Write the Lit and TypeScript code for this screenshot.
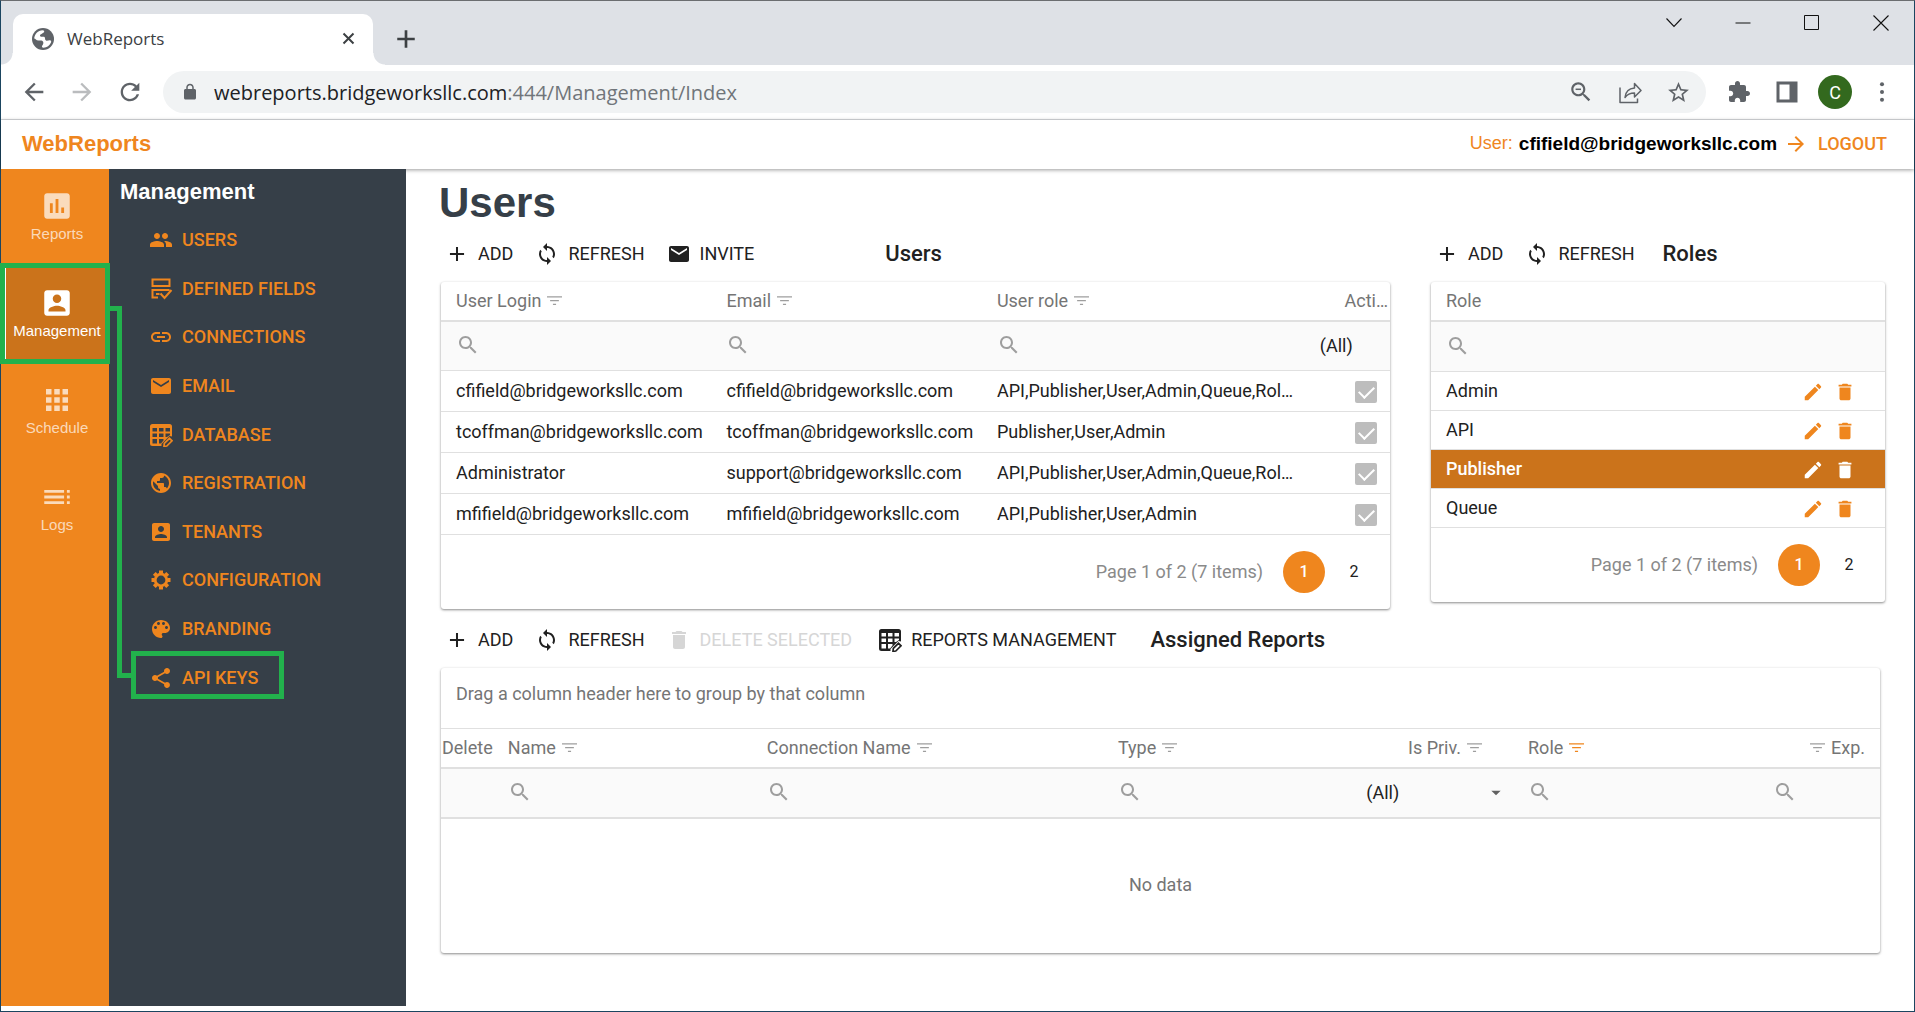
import { LitElement, html, css, svg } from "lit";
import { customElement, property } from "lit/decorators.js";
import { classMap } from "lit/directives/class-map.js";

const SEARCH =
  "M15.5 14h-.79l-.28-.27C15.41 12.59 16 11.11 16 9.5 16 5.91 13.09 3 9.5 3S3 5.91 3 9.5 5.91 16 9.5 16c1.61 0 3.09-.59 4.23-1.57l.27.28v.79l5 4.99L20.49 19l-4.99-5zm-6 0C7.01 14 5 11.99 5 9.5S7.01 5 9.5 5 14 7.01 14 9.5 11.99 14 9.5 14z";

const ICONS: Record<string, unknown> = {
  reports: svg`<path d="M19 3H5c-1.1 0-2 .9-2 2v14c0 1.1.9 2 2 2h14c1.1 0 2-.9 2-2V5c0-1.1-.9-2-2-2zM9 17H7v-7h2v7zm4 0h-2V7h2v10zm4 0h-2v-4h2v4z"/>`,
  account: svg`<path d="M3 5v14c0 1.1.89 2 2 2h14c1.1 0 2-.9 2-2V5c0-1.1-.9-2-2-2H5c-1.11 0-2 .9-2 2zm12 4c0 1.66-1.34 3-3 3s-3-1.34-3-3 1.34-3 3-3 3 1.34 3 3zm-9 8c0-2 4-3.1 6-3.1s6 1.1 6 3.1v1H6v-1z"/>`,
  apps: svg`<path d="M4 8h4V4H4v4zm6 12h4v-4h-4v4zm-6 0h4v-4H4v4zm0-6h4v-4H4v4zm6 0h4v-4h-4v4zm6-10v4h4V4h-4zm-6 4h4V4h-4v4zm6 6h4v-4h-4v4zm0 6h4v-4h-4v4z" transform="translate(-1.2 -1.2) scale(1.1)"/>`,
  logs: svg`<path d="M3 9h14V7H3v2zm0 4h14v-2H3v2zm0 4h14v-2H3v2zm16 0h2v-2h-2v2zm0-10v2h2V7h-2zm0 6h2v-2h-2v2z"/>`,
  people: svg`<path d="M16 11c1.66 0 2.99-1.34 2.99-3S17.66 5 16 5c-1.66 0-3 1.34-3 3s1.34 3 3 3zm-8 0c1.66 0 2.99-1.34 2.99-3S9.66 5 8 5C6.34 5 5 6.34 5 8s1.34 3 3 3zm0 2c-2.33 0-7 1.17-7 3.5V19h14v-2.5c0-2.33-4.67-3.5-7-3.5zm8 0c-.29 0-.62.02-.97.05 1.16.84 1.97 1.97 1.97 3.45V19h6v-2.5c0-2.33-4.67-3.5-7-3.5z"/>`,
  fields: svg`<g fill="none" stroke="currentColor" stroke-width="2"><rect x="3.500" y="2.500" width="17" height="6.500"/><path d="M9 20.500H3.500V13H20.500M7 17h3.500M11.500 16.500l4 4.500 7-8"/></g>`,
  link: svg`<path d="M3.9 12c0-1.71 1.39-3.1 3.1-3.1h4V7H7c-2.76 0-5 2.24-5 5s2.24 5 5 5h4v-1.9H7c-1.71 0-3.1-1.39-3.1-3.1zM8 13h8v-2H8v2zm9-6h-4v1.9h4c1.71 0 3.1 1.39 3.1 3.1s-1.39 3.1-3.1 3.1h-4V17h4c2.76 0 5-2.24 5-5s-2.24-5-5-5z"/>`,
  email: svg`<path d="M20 4H4c-1.1 0-1.99.9-1.99 2L2 18c0 1.1.9 2 2 2h16c1.1 0 2-.9 2-2V6c0-1.1-.9-2-2-2zm0 4l-8 5-8-5V6l8 5 8-5v2z"/>`,
  tableEdit: svg`<path fill-rule="evenodd" d="M3.500 1h17A2.500 2.500 0 0 1 23 3.500V13.500l-2.500-.5-8 8V23h-9A2.500 2.500 0 0 1 1 20.500v-17A2.500 2.500 0 0 1 3.500 1zM3.500 5v3.500h4.500V5zm6.500 0v3.500h4.500V5zm6.500 0v3.500H21V5zM3.500 10.500V14h4.500v-3.500zm6.500 0V14h4.500v-3.500zm6.500 0V14H18l3-2v-1.500zM3.500 16v4.500h4.500V16zm6.500 0v4.500h2l2.500-3V16z"/><path fill="none" stroke="currentColor" stroke-width="1.700" d="M15 23.300l.3-2.800 5.200-5.200 2.500 2.500-5.200 5.200z"/>`,
  globe: svg`<path d="M12 2C6.480 2 2 6.480 2 12s4.480 10 10 10 10-4.480 10-10S17.520 2 12 2zm-1 17.930c-3.950-.49-7-3.850-7-7.930 0-.62.080-1.210.210-1.790L9 15v1c0 1.100.9 2 2 2v1.930zm6.900-2.540c-.26-.81-1-1.390-1.900-1.390h-1v-3c0-.55-.45-1-1-1H8v-2h2c.55 0 1-.45 1-1V7h2c1.100 0 2-.9 2-2v-.41c2.930 1.190 5 4.060 5 7.410 0 2.080-.8 3.970-2.100 5.390z"/>`,
  favicon: svg`<circle cx="12" cy="12" r="11"/><path fill="#fff" d="M3.200 11.500C3.500 7 7 3.600 11.500 3.200c1.500 0 2 .8 1.500 2L10.500 7c-1.500.5-2 1.500-1 2.500 1 .8 3-.3 4 .5 1 1 0 2.500 1.500 3.500 1.300.8 2.500-.5 4-.3 1 .2 1.500 1 1 2.300-1.300 3-4 5-7.500 5.300-1.500 0-2-1-1.200-2.200 1-1.500 1.700-3.300.2-4.600-1-.8-2.500-.5-4-.5-2.500 0-3-2-4.300-2z"/>`,
  gear: svg`<g fill="none" stroke="currentColor"><circle cx="12" cy="12" r="5.800" stroke-width="2.800"/><g stroke-width="4"><path d="M12 2.500v3M12 18.500v3M2.500 12h3M18.500 12h3"/><path d="M5.300 5.300l2 2M16.700 16.700l2 2M5.300 18.700l2-2M16.700 7.300l2-2"/></g></g>`,
  palette: svg`<path d="M12 3c-4.970 0-9 4.030-9 9s4.030 9 9 9c.83 0 1.500-.67 1.500-1.500 0-.39-.15-.74-.39-1.010-.23-.26-.38-.61-.38-.99 0-.83.67-1.500 1.500-1.500H16c2.760 0 5-2.240 5-5 0-4.420-4.030-8-9-8zm-5.500 9c-.83 0-1.500-.67-1.500-1.500S5.670 9 6.500 9 8 9.670 8 10.500 7.330 12 6.500 12zm3-4C8.670 8 8 7.330 8 6.500S8.670 5 9.500 5s1.500.67 1.500 1.500S10.330 8 9.500 8zm5 0c-.83 0-1.500-.67-1.500-1.500S13.670 5 14.500 5s1.500.67 1.500 1.500S15.330 8 14.500 8zm3 4c-.83 0-1.500-.67-1.500-1.500S16.670 9 17.500 9s1.500.67 1.500 1.500-.67 1.500-1.500 1.500z"/>`,
  share: svg`<path d="M18 16.080c-.76 0-1.440.3-1.960.77L8.910 12.700c.05-.23.09-.46.09-.7s-.04-.47-.09-.7l7.050-4.110c.54.5 1.250.81 2.040.81 1.660 0 3-1.340 3-3s-1.340-3-3-3-3 1.340-3 3c0 .24.04.47.09.7L8.040 9.810C7.500 9.310 6.790 9 6 9c-1.660 0-3 1.340-3 3s1.340 3 3 3c.79 0 1.500-.31 2.040-.81l7.120 4.160c-.05.21-.08.43-.08.65 0 1.610 1.310 2.920 2.920 2.920 1.610 0 2.920-1.310 2.920-2.920s-1.310-2.920-2.920-2.920z"/>`,
  plus: svg`<path d="M19 13h-6v6h-2v-6H5v-2h6V5h2v6h6v2z" transform="translate(-1.200 -1.200) scale(1.100)"/>`,
  sync: svg`<path d="M12 4V1L8 5l4 4V6c3.310 0 6 2.690 6 6 0 1.010-.25 1.970-.7 2.800l1.460 1.460C19.540 15.030 20 13.570 20 12c0-4.420-3.580-8-8-8zm0 14c-3.310 0-6-2.690-6-6 0-1.010.25-1.970.7-2.800L5.240 7.740C4.460 8.970 4 10.430 4 12c0 4.420 3.580 8 8 8v3l4-4-4-4v3z"/>`,
  edit: svg`<path d="M3 17.250V21h3.750L17.810 9.940l-3.750-3.750L3 17.250zM20.710 7.040c.39-.39.39-1.020 0-1.410l-2.340-2.340c-.39-.39-1.020-.39-1.410 0l-1.830 1.830 3.750 3.750 1.830-1.830z"/>`,
  trash: svg`<path d="M6 19c0 1.100.9 2 2 2h8c1.100 0 2-.9 2-2V7H6v12zM19 4h-3.500l-1-1h-5l-1 1H5v2h14V4z"/>`,
  search: svg`<path d=${SEARCH}/>`,
  zoomOut: svg`<path d=${SEARCH}/><path d="M7 8.800h5v1.400H7z"/>`,
  star: svg`<path d="M22 9.240l-7.190-.62L12 2 9.190 8.630 2 9.240l5.460 4.730L5.820 21 12 17.270 18.180 21l-1.630-7.030L22 9.240zM12 15.400l-3.760 2.270 1-4.280-3.320-2.880 4.380-.38L12 6.100l1.710 4.040 4.380.38-3.320 2.880 1 4.280L12 15.400z"/>`,
  puzzle: svg`<path d="M20.500 11H19V7c0-1.100-.9-2-2-2h-4V3.500C13 2.120 11.880 1 10.500 1S8 2.120 8 3.500V5H4c-1.100 0-1.990.9-1.990 2v3.800H3.500c1.490 0 2.700 1.210 2.700 2.700s-1.210 2.700-2.700 2.700H2V20c0 1.100.9 2 2 2h3.800v-1.500c0-1.490 1.210-2.700 2.700-2.700 1.490 0 2.700 1.210 2.700 2.700V22H17c1.100 0 2-.9 2-2v-4h1.500c1.380 0 2.500-1.120 2.500-2.500S21.880 11 20.500 11z"/>`,
  panel: svg`<path fill-rule="evenodd" d="M1.500 1.500h21v21h-21zM4.500 4.500v15h10v-15z"/>`,
  dots: svg`<circle cx="12" cy="3.500" r="2.200"/><circle cx="12" cy="12" r="2.200"/><circle cx="12" cy="20.500" r="2.200"/>`,
  lock: svg`<path d="M18 8h-1V6c0-2.760-2.240-5-5-5S7 3.240 7 6v2H6c-1.100 0-2 .9-2 2v10c0 1.100.9 2 2 2h12c1.100 0 2-.9 2-2V10c0-1.100-.9-2-2-2zM9 6c0-1.660 1.340-3 3-3s3 1.340 3 3v2H9V6z"/>`,
  back: svg`<path d="M20 11H7.830l5.590-5.590L12 4l-8 8 8 8 1.410-1.410L7.830 13H20v-2z"/>`,
  forward: svg`<path d="M12 4l-1.410 1.410L16.170 11H4v2h12.170l-5.580 5.590L12 20l8-8z"/>`,
  reload: svg`<path d="M17.650 6.350C16.200 4.900 14.210 4 12 4c-4.420 0-7.990 3.580-7.990 8s3.570 8 7.990 8c3.730 0 6.840-2.550 7.730-6h-2.080c-.82 2.330-3.040 4-5.650 4-3.310 0-6-2.690-6-6s2.690-6 6-6c1.660 0 3.140.69 4.220 1.780L13 11h7V4l-2.350 2.350z"/>`,
  send: svg`<path fill="none" stroke="currentColor" stroke-width="1.500" stroke-linejoin="round" d="M2 7.500v15h17.500v-4M7 17.500c.5-6 3.500-9 9.500-9.500V3.500l6.500 7-6.500 6.500v-4c-4 0-7 1-9.500 4.500z"/>`,
  chevron: svg`<path fill="none" stroke="currentColor" stroke-width="1.100" d="M4.500 7.500l7.500 8 7.500-8"/>`,
  minimize: svg`<path d="M4.500 11.500h15v1h-15z"/>`,
  maximize: svg`<path fill="none" stroke="currentColor" stroke-width="1" d="M4.500 4.500h14v14h-14z"/>`,
  closeWin: svg`<path fill="none" stroke="currentColor" stroke-width="1.100" d="M4.500 4.500l15 15M19.500 4.500l-15 15"/>`,
  close: svg`<path fill="none" stroke="currentColor" stroke-width="3.200" d="M4 4l16 16M20 4L4 20"/>`,
  newTab: svg`<path fill="none" stroke="currentColor" stroke-width="3.200" d="M12 1.500v21M1.500 12h21"/>`,
  filter: svg`<path d="M0 5h24v2H0zM5 11h14v2H5zM9.500 17h5v2h-5z"/>`,
  caret: svg`<path d="M4 8h16l-8 8z"/>`,
};

@customElement("ui-icon")
class UiIcon extends LitElement {
  @property() name = "";
  @property({ type: Number }) size = 24;
  static styles = css`
    :host { display: inline-flex; flex: none; }
    svg { display: block; fill: currentColor; }
  `;
  render() {
    return html`<svg width=${this.size} height=${this.size} viewBox="0 0 24 24" aria-hidden="true">${ICONS[this.name]}</svg>`;
  }
}

@customElement("browser-chrome")
class BrowserChrome extends LitElement {
  static styles = css`
    :host { display: block; font-family: "Open Sans", "Noto Sans", sans-serif; color: #5f6368; }
    button { border: 0; padding: 0; background: none; color: inherit; font: inherit; display: inline-flex; align-items: center; justify-content: center; }
    .strip { height: 64px; background: #dee1e6; display: flex; align-items: flex-end; padding-left: 12px; }
    .tab { width: 360px; height: 51px; box-sizing: border-box; background: #fff; border-radius: 10px 10px 0 0; display: flex; align-items: center; padding: 0 17px 2px 18px; position: relative; color: #3c4043; }
    .tab::before, .tab::after { content: ""; position: absolute; bottom: 0; width: 12px; height: 12px; }
    .tab::before { left: -12px; background: radial-gradient(circle at 0 0, #dee1e6 11px, #fff 12px); }
    .tab::after { right: -12px; background: radial-gradient(circle at 100% 0, #dee1e6 11px, #fff 12px); }
    .tab-icon { color: #5f6368; }
    .tab-title { font-size: 17px; flex: 1; padding-left: 12px; }
    .new { align-self: center; margin-left: 23px; margin-top: 12px; color: #3c4043; }
    .window { margin-left: auto; align-self: flex-start; display: flex; padding: 10px 21px 0 0; gap: 45px; color: #111; }
    .bar { height: 54px; background: #fff; display: flex; align-items: center; border-bottom: 1px solid #d9dbde; padding: 0 21px 0 19px; }
    .nav { display: flex; gap: 20px; padding-right: 19px; }
    .off { color: #babcbe; }
    .omni { flex: 1; height: 42px; border-radius: 21px; background: #f1f3f4; display: flex; align-items: center; padding: 0 15px 0 18px; }
    .url { flex: 1; margin-left: 15px; font-size: 20px; color: #70757a; }
    .host { color: #202124; }
    .omni-actions { display: flex; gap: 24px; }
    .actions { display: flex; align-items: center; gap: 24px; padding-left: 21px; }
    .avatar { width: 34px; height: 34px; border-radius: 50%; background: #33691e; color: #fff; font: 18px Roboto, sans-serif; margin: 0 -5px; }
  `;
  render() {
    return html`
      <div class="strip">
        <div class="tab">
          <ui-icon class="tab-icon" name="favicon" size="24"></ui-icon>
          <span class="tab-title">WebReports</span>
          <button aria-label="Close tab"><ui-icon name="close" size="15"></ui-icon></button>
        </div>
        <button class="new" aria-label="New tab"><ui-icon name="newTab" size="20"></ui-icon></button>
        <div class="window">
          <button aria-label="Search tabs"><ui-icon name="chevron" size="24"></ui-icon></button>
          <button aria-label="Minimize"><ui-icon name="minimize" size="24"></ui-icon></button>
          <button aria-label="Maximize"><ui-icon name="maximize" size="24"></ui-icon></button>
          <button aria-label="Close"><ui-icon name="closeWin" size="24"></ui-icon></button>
        </div>
      </div>
      <div class="bar">
        <div class="nav">
          <button aria-label="Back"><ui-icon name="back" size="28"></ui-icon></button>
          <button class="off" aria-label="Forward"><ui-icon name="forward" size="28"></ui-icon></button>
          <button aria-label="Reload"><ui-icon name="reload" size="28"></ui-icon></button>
        </div>
        <div class="omni">
          <ui-icon name="lock" size="18"></ui-icon>
          <span class="url"><span class="host">webreports.bridgeworksllc.com</span>:444/Management/Index</span>
          <div class="omni-actions">
            <button aria-label="Zoom"><ui-icon name="zoomOut" size="26"></ui-icon></button>
            <button aria-label="Share"><ui-icon name="send" size="24"></ui-icon></button>
            <button aria-label="Bookmark"><ui-icon name="star" size="25"></ui-icon></button>
          </div>
        </div>
        <div class="actions">
          <button aria-label="Extensions"><ui-icon name="puzzle" size="24"></ui-icon></button>
          <button aria-label="Side panel"><ui-icon name="panel" size="24"></ui-icon></button>
          <button class="avatar" aria-label="Profile">C</button>
          <button aria-label="Menu"><ui-icon name="dots" size="22"></ui-icon></button>
        </div>
      </div>
    `;
  }
}

const RAIL = [
  ["Reports", "reports", 34],
  ["Management", "account", 34],
  ["Schedule", "apps", 30],
  ["Logs", "logs", 34],
] as const;

const MENU = [
  ["USERS", "people"],
  ["DEFINED FIELDS", "fields"],
  ["CONNECTIONS", "link"],
  ["EMAIL", "email"],
  ["DATABASE", "tableEdit"],
  ["REGISTRATION", "globe"],
  ["TENANTS", "account"],
  ["CONFIGURATION", "gear"],
  ["BRANDING", "palette"],
  ["API KEYS", "share"],
];

@customElement("side-nav")
class SideNav extends LitElement {
  static styles = css`
    :host { display: flex; position: relative; flex: none; font-family: "Liberation Sans", Arial, sans-serif; }
    .rail { width: 108px; background: #ef861e; }
    .rail-item { box-sizing: border-box; height: 97px; border-left: 4px solid transparent; display: flex; flex-direction: column; align-items: center; justify-content: flex-start; padding-top: 20px; gap: 2px; font-size: 15px; line-height: 18px; color: rgba(255, 255, 255, 0.7); text-decoration: none; white-space: nowrap; }
    .rail-icon { height: 34px; align-items: center; }
    .current { background: #cb731b; color: #fff; }
    .panel { width: 297px; background: #363f48; }
    .title { margin: 0; padding: 10px 0 0 11px; font-size: 22px; line-height: 26px; color: #fff; }
    .menu { list-style: none; margin: 0; padding: 11px 0 0 40px; height: 486px; display: grid; grid-auto-rows: 1fr; }
    .link { height: 100%; display: flex; align-items: center; gap: 9px; color: #ef861e; text-decoration: none; font: 500 18px/24px Roboto, sans-serif; }
    .mark { position: absolute; box-sizing: border-box; border: 5px solid #22b14c; pointer-events: none; }
    .mark-item { left: -1px; top: 94px; width: 110px; height: 101px; }
    .mark-link { left: 130px; top: 482px; width: 153px; height: 48px; }
    .mark-path { left: 109px; top: 137px; width: 12px; height: 371px; border-width: 5px 5px 0 0; }
    .mark-end { left: 116px; top: 504px; width: 14px; height: 5px; border-width: 5px 0 0; }
    .mark-edge { position: absolute; left: 4px; top: 99px; width: 1px; height: 91px; background: #fff; }
  `;
  render() {
    return html`
      <nav class="rail" aria-label="Sections">
        ${RAIL.map(
          ([label, icon, size]) => html`<a href="#" class=${classMap({ "rail-item": true, current: label === "Management" })}>
            <ui-icon class="rail-icon" name=${icon} size=${size}></ui-icon>${label}</a>`
        )}
      </nav>
      <nav class="panel" aria-label="Management">
        <h2 class="title">Management</h2>
        <ul class="menu">
          ${MENU.map(([label, icon]) => html`<li><a class="link" href="#"><ui-icon name=${icon} size="24"></ui-icon>${label}</a></li>`)}
        </ul>
      </nav>
      <span class="mark mark-path"></span>
      <span class="mark mark-end"></span>
      <span class="mark mark-item"></span>
      <span class="mark-edge"></span>
      <span class="mark mark-link"></span>
    `;
  }
}

const USERS = [
  ["cfifield@bridgeworksllc.com", "cfifield@bridgeworksllc.com", "API,Publisher,User,Admin,Queue,Rol…"],
  ["tcoffman@bridgeworksllc.com", "tcoffman@bridgeworksllc.com", "Publisher,User,Admin"],
  ["Administrator", "support@bridgeworksllc.com", "API,Publisher,User,Admin,Queue,Rol…"],
  ["mfifield@bridgeworksllc.com", "mfifield@bridgeworksllc.com", "API,Publisher,User,Admin"],
];

const ROLES = ["Admin", "API", "Publisher", "Queue"];

const toolButton = (label: string, icon: string, size: number, disabled = false) =>
  html`<button class="tool" ?disabled=${disabled}><span class="tool-icon"><ui-icon name=${icon} size=${size}></ui-icon></span>${label}</button>`;

const filterIcon = (active = false) =>
  html`<button class=${classMap({ "filter-btn": true, active })} aria-label="Filter"><ui-icon name="filter" size="15"></ui-icon></button>`;

const searchBox = (label: string) =>
  html`<label class="search"><ui-icon name="search" size="24"></ui-icon><input type="text" aria-label=${label} /></label>`;

const pager = () => html`<div class="pager">
  <span class="pager-info">Page 1 of 2 (7 items)</span>
  <button class="page selected">1</button>
  <button class="page">2</button>
</div>`;

@customElement("users-page")
class UsersPage extends LitElement {
  static styles = css`
    :host { display: block; flex: 1; min-width: 0; padding: 11px 29px 0 33px; font: 18px/24px Roboto, sans-serif; color: #212121; }
    * { box-sizing: border-box; }
    button { border: 0; padding: 0; background: none; color: inherit; font: inherit; }
    .heading { margin: 0; font: bold 42px/46px "Liberation Sans", Arial, sans-serif; color: #363f48; }
    .tops { display: grid; grid-template-columns: 949fr 454fr; gap: 41px; align-items: start; margin-left: 2px; }
    .toolbar { height: 56px; display: flex; align-items: center; padding-left: 4px; }
    .tool { display: inline-flex; align-items: center; margin-right: 22px; white-space: nowrap; }
    .tool[disabled] { color: #d6d6d6; margin-right: 26px; }
    .tool-icon { width: 24px; display: inline-flex; justify-content: center; margin-right: 9px; }
    .section { margin: 0; font-size: 22px; line-height: 26px; font-weight: 500; }
    .push { padding-left: 109px; }
    .near { padding-left: 6px; }
    .far { padding-left: 12px; }
    .card { background: #fff; border-radius: 3px; box-shadow: 0 1px 3px rgba(0, 0, 0, 0.3), 0 1px 2px rgba(0, 0, 0, 0.2); }
    table { width: 100%; table-layout: fixed; border-collapse: separate; border-spacing: 0; }
    th { height: 40px; padding: 0 0 0 15px; text-align: left; font-weight: 400; color: #757575; border-bottom: 2px solid #e0e0e0; white-space: nowrap; }
    th.tight { padding: 0 0 0 1px; }
    th.end { text-align: right; padding-right: 15px; }
    th.inset { text-align: right; padding-right: 25px; }
    th.flush { text-align: right; padding: 0 2px 0 0; }
    .filter-btn { color: #9e9e9e; display: inline-flex; vertical-align: middle; margin: 0 6px 3px; }
    .active { color: #ef861e; }
    td { height: 41px; padding: 0 4px 0 15px; border-bottom: 1px solid #e0e0e0; overflow: hidden; text-overflow: ellipsis; white-space: nowrap; }
    .filters td { height: 49px; background: #fafafa; color: #212121; }
    .filters.thick td { border-bottom-width: 2px; height: 50px; }
    .search { display: flex; color: #9e9e9e; }
    .search input { width: 100%; min-width: 0; border: 0; outline: 0; background: none; font: inherit; }
    select { appearance: none; border: 0; outline: 0; background: none; font: inherit; color: #212121; padding: 0; width: 100%; }
    .pick { display: flex; align-items: center; color: #616161; }
    td.all { padding: 0 8px 0 20px; }
    td.all.inset { padding: 0 10px 0 36px; }
    td.check { padding: 0 13px 0 0; text-align: right; }
    .tick { appearance: none; width: 22px; height: 22px; margin: 0; border-radius: 2px; background: #bdbdbd; display: inline-grid; place-items: center; vertical-align: middle; }
    .tick::before { content: ""; width: 13px; height: 7px; border: solid #fff; border-width: 0 0 2px 2px; rotate: -45deg; translate: 0 -2px; }
    .roles td { height: 39px; }
    .roles .filters td { height: 50px; }
    td.acts { padding: 0 29px 0 0; color: #ef861e; text-align: right; }
    .acts button { display: inline-flex; vertical-align: middle; margin-left: 10px; }
    .picked td { background: #cb731b; color: #fff; }
    .picked .name { font-weight: 500; }
    .pager { display: flex; align-items: center; justify-content: flex-end; padding: 16px; }
    .pager-info { color: #8a8a8a; padding-right: 20px; }
    .page { width: 42px; height: 42px; border-radius: 50%; font-size: 16px; margin-right: 8px; }
    .page:last-child { margin-right: -1px; }
    .selected { background: #ef861e; color: #fff; font-weight: 500; }
    .wide { margin: 3px 5px 0 2px; }
    .group { height: 61px; padding: 14px 15px; border-bottom: 1px solid #e0e0e0; color: #757575; }
    td.empty { height: 134px; padding: 0 0 2px; text-align: center; color: #757575; border: 0; }
  `;

  private usersGrid() {
    return html`<table>
      <colgroup><col style="width:28.5%" /><col style="width:28.5%" /><col style="width:33.5%" /><col /></colgroup>
      <thead><tr>
        <th>User Login${filterIcon()}</th><th>Email${filterIcon()}</th><th>User role${filterIcon()}</th>
        <th class="flush">Acti…</th>
      </tr></thead>
      <tbody>
        <tr class="filters">
          <td>${searchBox("Filter user login")}</td><td>${searchBox("Filter email")}</td><td>${searchBox("Filter user role")}</td>
          <td class="all"><select aria-label="Filter active"><option>(All)</option></select></td>
        </tr>
        ${USERS.map(([login, email, role]) => html`<tr>
          <td>${login}</td><td>${email}</td><td>${role}</td>
          <td class="check"><input class="tick" type="checkbox" checked disabled aria-label=${"Active " + login} /></td>
        </tr>`)}
      </tbody>
    </table>`;
  }

  private rolesGrid() {
    return html`<table class="roles">
      <colgroup><col /><col style="width:35%" /></colgroup>
      <thead><tr><th>Role</th><th></th></tr></thead>
      <tbody>
        <tr class="filters"><td>${searchBox("Filter role")}</td><td></td></tr>
        ${ROLES.map((role) => html`<tr class=${classMap({ picked: role === "Publisher" })}>
          <td class="name">${role}</td>
          <td class="acts">
            <button aria-label=${"Edit " + role}><ui-icon name="edit" size="22"></ui-icon></button><button aria-label=${"Delete " + role}><ui-icon name="trash" size="22"></ui-icon></button>
          </td>
        </tr>`)}
      </tbody>
    </table>`;
  }

  private reportsGrid() {
    return html`<table>
      <colgroup>
        <col style="width:3.6%" /><col style="width:18%" /><col style="width:24.4%" /><col style="width:15.8%" />
        <col style="width:12.7%" /><col style="width:17%" /><col />
      </colgroup>
      <thead><tr>
        <th class="tight">Delete</th><th>Name${filterIcon()}</th><th>Connection Name${filterIcon()}</th><th>Type${filterIcon()}</th>
        <th class="inset">Is Priv.${filterIcon()}</th><th>Role${filterIcon(true)}</th><th class="end">${filterIcon()}Exp.</th>
      </tr></thead>
      <tbody>
        <tr class="filters thick">
          <td></td><td>${searchBox("Filter name")}</td><td>${searchBox("Filter connection name")}</td><td>${searchBox("Filter type")}</td>
          <td class="all inset"><label class="pick"><select aria-label="Filter private"><option>(All)</option></select><ui-icon name="caret" size="14"></ui-icon></label></td>
          <td>${searchBox("Filter role")}</td><td>${searchBox("Filter expiration")}</td>
        </tr>
        <tr><td class="empty" colspan="7">No data</td></tr>
      </tbody>
    </table>`;
  }

  render() {
    return html`
      <h1 class="heading">Users</h1>
      <div class="tops">
        <section>
          <div class="toolbar">
            ${toolButton("ADD", "plus", 22)}${toolButton("REFRESH", "sync", 24)}${toolButton("INVITE", "email", 24)}
            <h2 class="section push">Users</h2>
          </div>
          <div class="card">${this.usersGrid()}${pager()}</div>
        </section>
        <section>
          <div class="toolbar">
            ${toolButton("ADD", "plus", 22)}${toolButton("REFRESH", "sync", 24)}
            <h2 class="section near">Roles</h2>
          </div>
          <div class="card">${this.rolesGrid()}${pager()}</div>
        </section>
      </div>
      <section class="wide">
        <div class="toolbar">
          ${toolButton("ADD", "plus", 22)}${toolButton("REFRESH", "sync", 24)}${toolButton("DELETE SELECTED", "trash", 24, true)}
          ${toolButton("REPORTS MANAGEMENT", "tableEdit", 24)}
          <h2 class="section far">Assigned Reports</h2>
        </div>
        <div class="card">
          <div class="group">Drag a column header here to group by that column</div>
          ${this.reportsGrid()}
        </div>
      </section>
    `;
  }
}

@customElement("app-root")
class AppRoot extends LitElement {
  static styles = css`
    :host { display: flex; flex-direction: column; box-sizing: border-box; min-height: 100vh; background: #fff; border: 1px solid #1b4560; border-top-color: #6b6d70; }
    .header { height: 49px; box-sizing: border-box; display: flex; align-items: center; justify-content: space-between; padding: 0 27px 2px 21px; background: #fff; box-shadow: 0 1px 4px rgba(0, 0, 0, 0.4); font-family: "Liberation Sans", Arial, sans-serif; }
    .brand { font-size: 22px; font-weight: 700; color: #ef861e; }
    .account { display: flex; align-items: center; font-size: 18px; color: #ef861e; }
    .mail { font-size: 19px; color: #000; padding-left: 6px; }
    .logout { display: flex; align-items: center; gap: 10px; margin-left: 7px; color: #ef861e; text-decoration: none; font: 500 18px/24px Roboto, sans-serif; }
    .body { flex: 1; display: flex; padding-bottom: 5px; }
    side-nav { z-index: 1; }
  `;
  render() {
    return html`
      <browser-chrome></browser-chrome>
      <header class="header">
        <span class="brand">WebReports</span>
        <div class="account">User: <strong class="mail">cfifield@bridgeworksllc.com</strong>
          <a class="logout" href="#"><ui-icon name="forward" size="24"></ui-icon>LOGOUT</a>
        </div>
      </header>
      <div class="body">
        <side-nav></side-nav>
        <users-page></users-page>
      </div>
    `;
  }
}
